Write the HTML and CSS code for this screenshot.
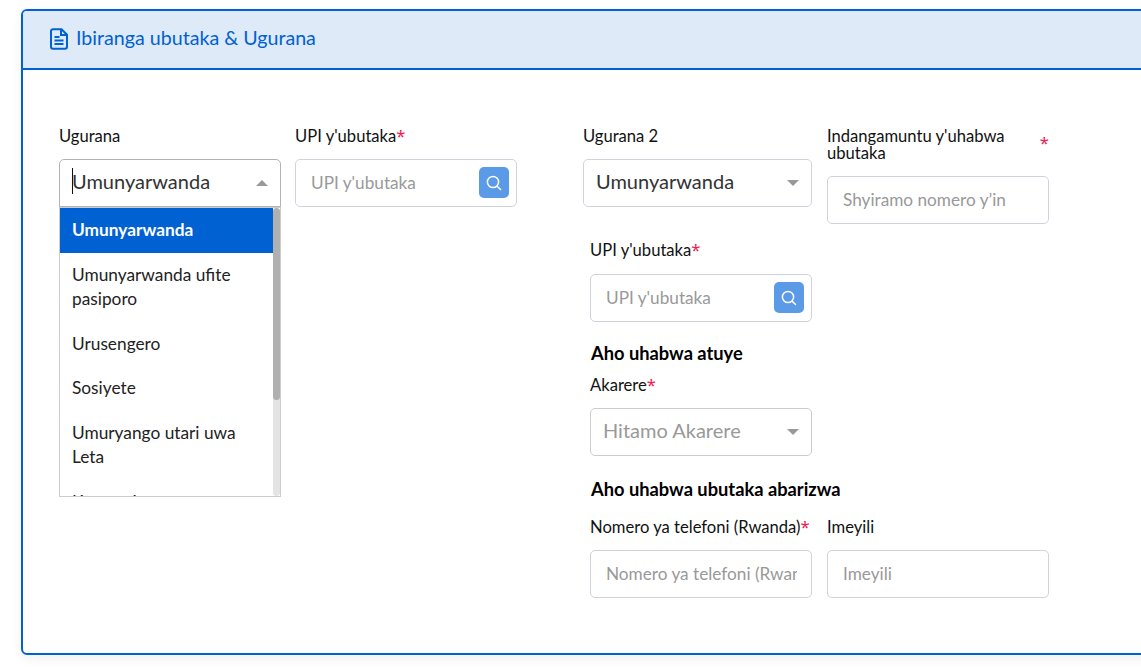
FILE: index.html
```html
<!DOCTYPE html>
<html lang="rw">
<head>
<meta charset="utf-8">
<title>Ibiranga ubutaka &amp; Ugurana</title>
<link rel="stylesheet" href="styles.css">
</head>
<body>
<section class="card">
  <header class="card-head">
    <svg class="doc-icon" viewBox="0 0 18 22" width="18" height="22" aria-hidden="true">
      <path d="M11.5 1.2H3A2 2 0 0 0 1 3.2v15.6a2 2 0 0 0 2 2h12a2 2 0 0 0 2-2V6.7z" fill="none" stroke="currentColor" stroke-width="2" stroke-linejoin="round"/>
      <path d="M11 1.5V7h5.5" fill="none" stroke="currentColor" stroke-width="2"/>
      <path d="M4.5 9h5M4.5 12.5h9M4.5 16h9" fill="none" stroke="currentColor" stroke-width="2"/>
    </svg>
    <h2 class="card-title">Ibiranga ubutaka &amp; Ugurana</h2>
  </header>
  <div class="card-body">
    <div class="left-block">
      <div class="field">
        <label class="label">Ugurana</label>
        <div class="select select-open">
          <span class="caret"></span>
          <span class="select-value">Umunyarwanda</span>
          <span class="arrow arrow-up"></span>
        </div>
        <div class="menu">
          <ul class="menu-list">
            <li class="menu-item menu-item-active">Umunyarwanda</li>
            <li class="menu-item">Umunyarwanda ufite pasiporo</li>
            <li class="menu-item">Urusengero</li>
            <li class="menu-item">Sosiyete</li>
            <li class="menu-item">Umuryango utari uwa Leta</li>
            <li class="menu-item menu-item-clipped">Koperative</li>
          </ul>
          <div class="scroll-track"><div class="scroll-thumb"></div></div>
        </div>
      </div>
      <div class="field">
        <label class="label">UPI y'ubutaka<span class="req">*</span></label>
        <div class="input-group">
          <input class="bare-input" type="text" placeholder="UPI y'ubutaka">
          <button class="search-btn" type="button" aria-label="Shakisha">
            <svg viewBox="0 0 16 16" width="16" height="16" aria-hidden="true"><circle cx="7" cy="7" r="5.6" fill="none" stroke="#fff" stroke-width="1.5"/><path d="M11.2 11.2l3.3 3.3" stroke="#fff" stroke-width="1.5" stroke-linecap="round"/></svg>
          </button>
        </div>
      </div>
    </div>
    <div class="right-block">
      <div class="top-row">
        <div class="field field-wide">
          <label class="label">Ugurana 2</label>
          <div class="select"><span class="select-value">Umunyarwanda</span><span class="arrow"></span></div>
        </div>
        <div class="field">
          <label class="label label-split"><span>Indangamuntu y'uhabwa ubutaka</span><span class="req req-side">*</span></label>
          <input class="text-input" type="text" placeholder="Shyiramo nomero y’in">
        </div>
      </div>
      <div class="inset">
        <div class="field field-upi">
          <label class="label label-upi">UPI y'ubutaka<span class="req">*</span></label>
          <div class="input-group">
            <input class="bare-input" type="text" placeholder="UPI y'ubutaka">
            <button class="search-btn" type="button" aria-label="Shakisha">
              <svg viewBox="0 0 16 16" width="16" height="16" aria-hidden="true"><circle cx="7" cy="7" r="5.6" fill="none" stroke="#fff" stroke-width="1.5"/><path d="M11.2 11.2l3.3 3.3" stroke="#fff" stroke-width="1.5" stroke-linecap="round"/></svg>
            </button>
          </div>
        </div>
        <h3 class="section-title section-first">Aho uhabwa atuye</h3>
        <div class="field">
          <label class="label">Akarere<span class="req">*</span></label>
          <div class="select select-muted"><span class="select-value">Hitamo Akarere</span><span class="arrow"></span></div>
        </div>
        <h3 class="section-title section-second">Aho uhabwa ubutaka abarizwa</h3>
        <div class="bottom-row">
          <div class="field">
            <label class="label">Nomero ya telefoni (Rwanda)<span class="req">*</span></label>
            <input class="text-input" type="text" placeholder="Nomero ya telefoni (Rwanda)">
          </div>
          <div class="field">
            <label class="label">Imeyili</label>
            <input class="text-input" type="text" placeholder="Imeyili">
          </div>
        </div>
      </div>
    </div>
  </div>
</section>
</body>
</html>
```
FILE: styles.css
```css
* { box-sizing: border-box; }
html, body { height: 100%; }
body {
  margin: 0;
  background: #fff;
  overflow: hidden;
  font-family: Lato, "Noto Sans", sans-serif;
  color: #111;
}
.card {
  width: 1140px;
  height: 646px;
  margin: 9px 0 0 21px;
  border: 2px solid #0061d2;
  border-radius: 6px;
  box-shadow: 0 4px 12px rgba(0, 0, 0, 0.06);
  overflow: hidden;
}
.card-head {
  height: 59px;
  display: flex;
  align-items: center;
  gap: 8px;
  padding: 0 0 2px 27px;
  background: #deeaf7;
  border-bottom: 2px solid #0061d2;
  color: #0061d2;
}
.doc-icon { flex: none; }
.card-title { margin: 0 0 2px; font-size: 19.65px; font-weight: 400; }
.card-body {
  display: flex;
  align-items: flex-start;
  padding: 57px 0 0 36px;
}
.left-block { display: flex; gap: 14px; width: 524px; }
.left-block .field { width: 222px; }
.right-block { width: 466px; }
.field { position: relative; width: 222px; }
.field-wide { width: 229px; }
.top-row { display: flex; gap: 15px; }
.inset { padding-left: 7px; }
.field-upi { margin-top: 17px; }
.label {
  display: block;
  height: 32px;
  padding-top: 1px;
  font-size: 16.6px;
  line-height: 17px;
  color: #111;
  white-space: nowrap;
}
.label-upi { height: 33px; }
.label-split {
  display: flex;
  height: 49px;
  white-space: normal;
}
.label-split > span:first-child { width: 214px; padding-right: 20px; }
.req { color: #f5164e; font-family: "Noto Sans", sans-serif; line-height: 0; }
.req-side { margin-top: 6px; line-height: 17px; }
.select, .input-group, .text-input {
  height: 48px;
  border: 1px solid #d0d3da;
  border-radius: 5px;
  background: #fff;
}
.select {
  display: flex;
  align-items: center;
  justify-content: space-between;
  position: relative;
  padding: 0 12px;
  font-size: 20px;
  color: #333;
}
.select-open { border-color: #b3b3b3; border-radius: 5px 5px 0 0; }
.select-muted { color: #999; border-color: #ccc; }
.select-value { white-space: nowrap; margin-bottom: 4px; }
.caret { position: absolute; left: 12px; top: 8px; width: 1px; height: 26px; background: #111; }
.arrow {
  width: 0; height: 0;
  border-left: 6px solid transparent;
  border-right: 6px solid transparent;
  border-top: 6px solid #999;
}
.arrow-up { border-top: 0; border-bottom: 6px solid #999; }
.text-input, .bare-input {
  font: inherit;
  font-size: 17.2px;
  color: #333;
  outline: 0;
}
.text-input { display: block; width: 100%; padding: 0 14px 2px 15px; }
.bare-input { flex: 1; min-width: 0; height: 100%; padding: 0 0 2px 15px; border: 0; background: transparent; }
.text-input::placeholder, .bare-input::placeholder { color: #999; opacity: 1; }
.input-group { display: flex; align-items: center; padding-right: 7px; }
.search-btn {
  flex: none;
  width: 30px;
  height: 31px;
  margin-bottom: 1px;
  padding: 0;
  display: flex;
  align-items: center;
  justify-content: center;
  background: #5a9ae6;
  border: 0;
  border-radius: 5px;
}
.section-title { margin: 0; padding-left: 1px; font-size: 18.3px; font-weight: 700; line-height: 22px; color: #000; }
.section-first { margin-top: 20px; margin-bottom: 12px; }
.section-second { margin-top: 22px; margin-bottom: 18px; }
.bottom-row { display: flex; gap: 15px; }
.menu {
  position: absolute;
  left: 0;
  top: 80px;
  width: 222px;
  height: 290px;
  display: flex;
  background: #fff;
  border: 1px solid #ccc;
  z-index: 2;
}
.menu-list {
  flex: 1;
  margin: 0;
  padding: 0;
  list-style: none;
  overflow: hidden;
  font-size: 17.3px;
  line-height: 24.5px;
  color: #222;
}
.menu-item { padding: 10px 12px; }
.menu-item-clipped { padding-top: 10px; }
.menu-item-active { background: #0061d2; color: #fff; font-weight: 700; }
.scroll-track { width: 7px; background: #e4e4e4; border-radius: 4px; }
.scroll-thumb { height: 192px; background: #b0b0b0; border-radius: 4px; }
```
